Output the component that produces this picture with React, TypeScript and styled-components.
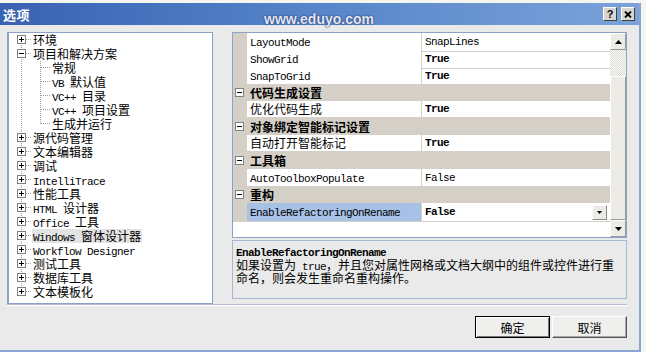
import React from "react";
import styled, { createGlobalStyle } from "styled-components";

const GlobalStyle = createGlobalStyle`
  html, body {
    margin: 0;
    padding: 0;
  }

  body {
    width: 646px;
    height: 352px;
    overflow: hidden;
    background: #f6f6f1;
    color: #000;
    font-family: "Noto Sans CJK SC", "Liberation Sans", sans-serif;
    font-size: 12px;
  }
`;

const Window = styled.div`
  margin-top: 3px;
  width: 641px;
  height: 349px;
  box-sizing: border-box;
  display: flex;
  flex-direction: column;
  background: #eaeaea;
  border-right: 2px solid #8aa5d3;
  border-bottom: 2px solid #8aa5d3;
`;

const TitleBar = styled.div`
  height: 22px;
  flex: 0 0 22px;
  display: flex;
  align-items: center;
  padding: 0 4px 0 3px;
  background: linear-gradient(90deg, #3962b2 0%, #5382c8 45%, #7ba3da 100%);
`;

const Title = styled.span`
  color: #fff;
  font-size: 13px;
  font-weight: 700;
  letter-spacing: 0.5px;
`;

// 水印，稍微压在标题栏下边
const Watermark = styled.span`
  position: relative;
  top: 5px;
  margin-left: 234px;
  color: #e2e7f6;
  font-family: "Liberation Sans", sans-serif;
  font-size: 14px;
  font-weight: 700;
  text-shadow: 0 0 2px #26386a, 0 0 1px #26386a;
`;

const CaptionButtons = styled.div`
  margin-left: auto;
  display: flex;
  gap: 4px;
`;

const CaptionButton = styled.div`
  width: 14px;
  height: 14px;
  box-sizing: border-box;
  display: flex;
  align-items: center;
  justify-content: center;
  background: #d8d6d0;
  border: 1px solid;
  border-color: #fff #404040 #404040 #fff;
  font-family: "Liberation Sans", sans-serif;
  font-size: 11px;
  font-weight: 700;
  line-height: 1;
`;

const Body = styled.div`
  flex: 1;
  display: flex;
  flex-direction: column;
  padding: 7px 12px 0 7px;
`;

const Main = styled.div`
  display: flex;
  gap: 19px;
  height: 272px;
`;

const TreeFrame = styled.div`
  width: 206px;
  box-sizing: border-box;
  border: 1px solid #8ba3c6;
  border-left-width: 2px;
  background: #fff;
  padding-left: 3px;
  overflow: hidden;
`;

const TreeRow = styled.div`
  display: flex;
  align-items: center;
  height: 14px;
`;

const TreeLabel = styled.span<{ $selected?: boolean }>`
  display: inline-block;
  height: 14px;
  margin-left: 1px;
  padding: 0 1px;
  line-height: 14px;
  white-space: nowrap;
  overflow: visible;
  background: ${(p) => (p.$selected ? "#e3e3e3" : "transparent")};
`;

const Latin = styled.span<{ $bold?: boolean }>`
  font-family: "Liberation Mono", "DejaVu Sans Mono", monospace;
  font-size: 11px;
  letter-spacing: -0.6px;
  font-weight: ${(p) => (p.$bold ? 700 : 400)};
`;

const RightColumn = styled.div`
  width: 395px;
  display: flex;
  flex-direction: column;
`;

const GridFrame = styled.div`
  height: 206px;
  box-sizing: border-box;
  display: flex;
  border: 1px solid #8ba3c6;
  background: #fff;
`;

const GridRows = styled.div`
  flex: 1;
  display: flex;
  flex-direction: column;
`;

const PropRow = styled.div`
  display: grid;
  grid-template-columns: 14px 175px 1fr;
  height: 17px;
`;

const Gutter = styled.div`
  background: #d4d0c8;
`;

const NameCell = styled.div<{ $selected?: boolean }>`
  box-sizing: border-box;
  padding-left: 3px;
  line-height: 16px;
  white-space: nowrap;
  border-right: 1px solid #d4d0c8;
  border-bottom: 1px solid #d4d0c8;
  background: ${(p) => (p.$selected ? "#a7c0e5" : "#fff")};
`;

const ValueCell = styled.div`
  box-sizing: border-box;
  display: flex;
  align-items: center;
  padding-left: 3px;
  padding-right: 3px;
  line-height: 16px;
  white-space: nowrap;
  border-bottom: 1px solid #d4d0c8;
`;

const CategoryRow = styled.div`
  display: flex;
  align-items: center;
  height: 17px;
  padding-left: 2px;
  background: #d4d0c8;
  font-weight: 700;
  gap: 6px;
`;

const DropButton = styled.div`
  margin-left: auto;
  width: 15px;
  height: 15px;
  box-sizing: border-box;
  display: flex;
  align-items: center;
  justify-content: center;
  background: #ecebe6;
  border: 1px solid;
  border-color: #fff #8c8c8c #8c8c8c #fff;
`;

const ScrollBar = styled.div`
  width: 16px;
  display: flex;
  flex-direction: column;
  background: #efeee9;
`;

const ScrollButton = styled.div`
  height: 17px;
  flex: 0 0 17px;
  box-sizing: border-box;
  display: flex;
  align-items: center;
  justify-content: center;
  background: #ecebe6;
  border: 1px solid;
  border-color: #fff #9a9a9a #9a9a9a #fff;
`;

const ScrollTrack = styled.div`
  flex: 0 0 26px;
  background: repeating-conic-gradient(#fbfbf8 0 25%, #dcdad3 0 50%) 0 0 / 2px 2px;
`;

const ScrollThumb = styled.div`
  flex: 1;
  box-sizing: border-box;
  background: #ecebe6;
  border: 1px solid;
  border-color: #fff #9a9a9a #9a9a9a #fff;
`;

const Description = styled.div`
  margin-top: 2px;
  height: 59px;
  box-sizing: border-box;
  padding: 3px 3px 0;
  border: 1px solid #a6b8d4;
`;

const DescTitle = styled.div`
  height: 14px;
  line-height: 14px;
`;

const DescLine = styled.div`
  height: 13px;
  line-height: 13px;
  white-space: nowrap;
`;

const Separator = styled.div`
  border-top: 1px solid #b3bccb;
  border-bottom: 1px solid #fff;
`;

const ButtonRow = styled.div`
  display: flex;
  justify-content: flex-end;
  gap: 2px;
  margin-top: 10px;
`;

const Button = styled.button<{ $default?: boolean }>`
  width: 75px;
  height: 22px;
  padding: 0;
  box-sizing: border-box;
  font-family: "Noto Sans CJK SC", sans-serif;
  font-size: 12px;
  color: #000;
  background: #efefed;
  border: 1px solid;
  border-color: ${(p) => (p.$default ? "#000" : "#fff #555 #555 #fff")};
  box-shadow: ${(p) =>
    p.$default
      ? "inset 1px 1px #fff, inset -1px -1px #777"
      : "inset -1px -1px #a8a8a8"};
`;

// 中文与西文混排：西文用等宽小号字体，模仿宋体的半角字符
const Mixed: React.FC<{ text: string; bold?: boolean }> = ({ text, bold }) => (
  <>
    {text
      .split(/([ -~]+)/)
      .filter(Boolean)
      .map((part, i) =>
        /^[ -~]+$/.test(part) ? (
          <Latin key={i} $bold={bold}>
            {part}
          </Latin>
        ) : (
          <React.Fragment key={i}>{part}</React.Fragment>
        )
      )}
  </>
);

type Expander = "plus" | "minus";

const ExpanderBox: React.FC<{ kind: Expander; x: number; y: number }> = ({ kind, x, y }) => (
  <>
    <rect x={x + 0.5} y={y + 0.5} width={8} height={8} fill="#fff" stroke="#808080" />
    <line x1={x + 2} y1={y + 4.5} x2={x + 7} y2={y + 4.5} stroke="#000" />
    {kind === "plus" && <line x1={x + 4.5} y1={y + 2} x2={x + 4.5} y2={y + 7} stroke="#000" />}
  </>
);

// 树的连接线（虚线）与展开框
const Connector: React.FC<{ up?: boolean; down?: boolean; branch?: boolean; expander?: Expander }> = ({
  up,
  down,
  branch,
  expander,
}) => (
  <svg width={19} height={14} viewBox="0 0 19 14" shapeRendering="crispEdges">
    {(up || down) && (
      <line
        x1={9.5}
        y1={up ? 0 : 6}
        x2={9.5}
        y2={down ? 14 : 7}
        stroke="#a0a0a0"
        strokeDasharray="1 1"
      />
    )}
    {branch && (
      <line x1={expander ? 14 : 10} y1={6.5} x2={19} y2={6.5} stroke="#a0a0a0" strokeDasharray="1 1" />
    )}
    {expander && <ExpanderBox kind={expander} x={5} y={2} />}
  </svg>
);

const Triangle: React.FC<{ dir: "up" | "down"; size?: number }> = ({ dir, size = 7 }) => {
  const h = Math.ceil(size / 2);
  const points = dir === "up" ? `0,${h} ${size},${h} ${size / 2},0` : `0,0 ${size},0 ${size / 2},${h}`;
  return (
    <svg width={size} height={h} viewBox={`0 0 ${size} ${h}`}>
      <polygon points={points} fill="#000" />
    </svg>
  );
};

const CloseGlyph = () => (
  <svg width={8} height={7} viewBox="0 0 8 7">
    <path d="M1 0.5 L7 6.5 M7 0.5 L1 6.5" stroke="#000" strokeWidth={1.8} />
  </svg>
);

type TreeItem = { label: string; level: 0 | 1; expander?: Expander; selected?: boolean };

const treeItems: TreeItem[] = [
  { label: "环境", level: 0, expander: "plus" },
  { label: "项目和解决方案", level: 0, expander: "minus" },
  { label: "常规", level: 1 },
  { label: "VB 默认值", level: 1 },
  { label: "VC++ 目录", level: 1 },
  { label: "VC++ 项目设置", level: 1 },
  { label: "生成并运行", level: 1 },
  { label: "源代码管理", level: 0, expander: "plus" },
  { label: "文本编辑器", level: 0, expander: "plus" },
  { label: "调试", level: 0, expander: "plus" },
  { label: "IntelliTrace", level: 0, expander: "plus" },
  { label: "性能工具", level: 0, expander: "plus" },
  { label: "HTML 设计器", level: 0, expander: "plus" },
  { label: "Office 工具", level: 0, expander: "plus" },
  { label: "Windows 窗体设计器", level: 0, expander: "plus", selected: true },
  { label: "Workflow Designer", level: 0, expander: "plus" },
  { label: "测试工具", level: 0, expander: "plus" },
  { label: "数据库工具", level: 0, expander: "plus" },
  { label: "文本模板化", level: 0, expander: "plus" },
];

type GridItem =
  | { kind: "cat"; name: string }
  | { kind: "prop"; name: string; value: string; bold?: boolean; selected?: boolean };

const gridItems: GridItem[] = [
  { kind: "prop", name: "LayoutMode", value: "SnapLines" },
  { kind: "prop", name: "ShowGrid", value: "True", bold: true },
  { kind: "prop", name: "SnapToGrid", value: "True", bold: true },
  { kind: "cat", name: "代码生成设置" },
  { kind: "prop", name: "优化代码生成", value: "True", bold: true },
  { kind: "cat", name: "对象绑定智能标记设置" },
  { kind: "prop", name: "自动打开智能标记", value: "True", bold: true },
  { kind: "cat", name: "工具箱" },
  { kind: "prop", name: "AutoToolboxPopulate", value: "False" },
  { kind: "cat", name: "重构" },
  { kind: "prop", name: "EnableRefactoringOnRename", value: "False", bold: true, selected: true },
];

const OptionsTree: React.FC = () => {
  const lastTop = treeItems.length - 1;
  return (
    <TreeFrame>
      {treeItems.map((item, i) => {
        const next = treeItems[i + 1];
        return (
          <TreeRow key={item.label}>
            {item.level === 0 ? (
              <Connector up={i > 0} down={i < lastTop} branch expander={item.expander} />
            ) : (
              <>
                <Connector up down />
                <Connector up down={next?.level === 1} branch />
              </>
            )}
            <TreeLabel $selected={item.selected}>
              <Mixed text={item.label} />
            </TreeLabel>
          </TreeRow>
        );
      })}
    </TreeFrame>
  );
};

const PropertyGrid: React.FC = () => (
  <GridFrame>
    <GridRows>
      {gridItems.map((item) =>
        item.kind === "cat" ? (
          <CategoryRow key={item.name}>
            <svg width={9} height={9} viewBox="0 0 9 9" shapeRendering="crispEdges">
              <ExpanderBox kind="minus" x={0} y={0} />
            </svg>
            <span>{item.name}</span>
          </CategoryRow>
        ) : (
          <PropRow key={item.name}>
            <Gutter />
            <NameCell $selected={item.selected}>
              <Mixed text={item.name} />
            </NameCell>
            <ValueCell>
              <Latin $bold={item.bold}>{item.value}</Latin>
              {item.selected && (
                <DropButton>
                  <Triangle dir="down" size={5} />
                </DropButton>
              )}
            </ValueCell>
          </PropRow>
        )
      )}
    </GridRows>
    <ScrollBar>
      <ScrollButton>
        <Triangle dir="up" />
      </ScrollButton>
      <ScrollTrack />
      <ScrollThumb />
      <ScrollButton>
        <Triangle dir="down" />
      </ScrollButton>
    </ScrollBar>
  </GridFrame>
);

const App: React.FC = () => (
  <>
    <GlobalStyle />
    <Window>
      <TitleBar>
        <Title>选项</Title>
        <Watermark>www.eduyo.com</Watermark>
        <CaptionButtons>
          <CaptionButton>?</CaptionButton>
          <CaptionButton>
            <CloseGlyph />
          </CaptionButton>
        </CaptionButtons>
      </TitleBar>
      <Body>
        <Main>
          <OptionsTree />
          <RightColumn>
            <PropertyGrid />
            <Description>
              <DescTitle>
                <Latin $bold>EnableRefactoringOnRename</Latin>
              </DescTitle>
              <DescLine>
                <Mixed text="如果设置为 true，并且您对属性网格或文档大纲中的组件或控件进行重" />
              </DescLine>
              <DescLine>命名，则会发生重命名重构操作。</DescLine>
            </Description>
          </RightColumn>
        </Main>
        <Separator />
        <ButtonRow>
          <Button $default>确定</Button>
          <Button>取消</Button>
        </ButtonRow>
      </Body>
    </Window>
  </>
);

export default App;
